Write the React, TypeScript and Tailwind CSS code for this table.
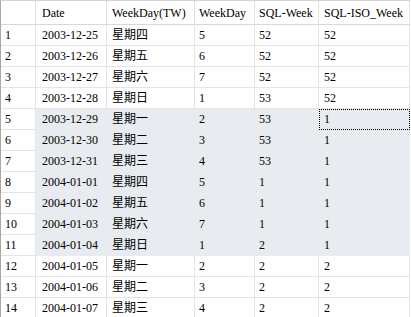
import React from "react";

const cols = [
  { key: "n", label: "", w: "w-[35px]", pad: "pl-[4px]" },
  { key: "date", label: "Date", w: "w-[71px]", pad: "pl-[6px]" },
  { key: "tw", label: "WeekDay(TW)", w: "w-[88px]", pad: "pl-[5px]" },
  { key: "wd", label: "WeekDay", w: "w-[60px]", pad: "pl-[4px]" },
  { key: "sw", label: "SQL-Week", w: "w-[64px]", pad: "pl-[4px]" },
  { key: "iso", label: "SQL-ISO_Week", w: "w-[91px]", pad: "pl-[5px]" },
];

const rows = [
  ["2003-12-25", "星期四", "5", "52", "52"],
  ["2003-12-26", "星期五", "6", "52", "52"],
  ["2003-12-27", "星期六", "7", "52", "52"],
  ["2003-12-28", "星期日", "1", "53", "52"],
  ["2003-12-29", "星期一", "2", "53", "1"],
  ["2003-12-30", "星期二", "3", "53", "1"],
  ["2003-12-31", "星期三", "4", "53", "1"],
  ["2004-01-01", "星期四", "5", "1", "1"],
  ["2004-01-02", "星期五", "6", "1", "1"],
  ["2004-01-03", "星期六", "7", "1", "1"],
  ["2004-01-04", "星期日", "1", "2", "1"],
  ["2004-01-05", "星期一", "2", "2", "2"],
  ["2004-01-06", "星期二", "3", "2", "2"],
  ["2004-01-07", "星期三", "4", "2", "2"],
];

export default function App() {
  return (
    <div
      className="w-[411px] h-[317px] overflow-hidden bg-white text-[12px] text-black"
      style={{ fontFamily: '"Liberation Serif", "Noto Sans CJK TC", serif' }}
    >
      <div className="w-[410px] border-l border-t border-l-[#a8a8a8] border-t-[#d4d4d4]">
        {/* header */}
        <div className="flex h-[24px] border-b border-[#d8d8d8] bg-white">
          {cols.map((c) => (
            <div
              key={c.key}
              className={`${c.w} ${c.pad} shrink-0 flex items-center border-r border-[#e2e2e2] leading-none`}
            >
              {c.label}
            </div>
          ))}
        </div>
        {rows.map((r, i) => {
          const selected = i >= 4 && i <= 10;
          return (
            <div key={i} className="flex h-[21px]">
              <div className="w-[35px] pl-[4px] shrink-0 flex items-center border-r border-b border-[#e4e4e4] bg-white">
                {i + 1}
              </div>
              {r.map((v, j) => {
                const c = cols[j + 1];
                const focus = i === 4 && j === 4;
                return (
                  <div
                    key={j}
                    className={`${c.w} ${c.pad} shrink-0 flex items-center border-r border-b ${
                      selected ? "bg-[#e8ecf0] border-[#e8ecf0]" : "bg-white border-[#e4e4e4]"
                    } ${focus ? "outline-1 outline-dotted outline-offset-[-1px] outline-black" : ""}`}
                  >
                    {v}
                  </div>
                );
              })}
            </div>
          );
        })}
      </div>
    </div>
  );
}
